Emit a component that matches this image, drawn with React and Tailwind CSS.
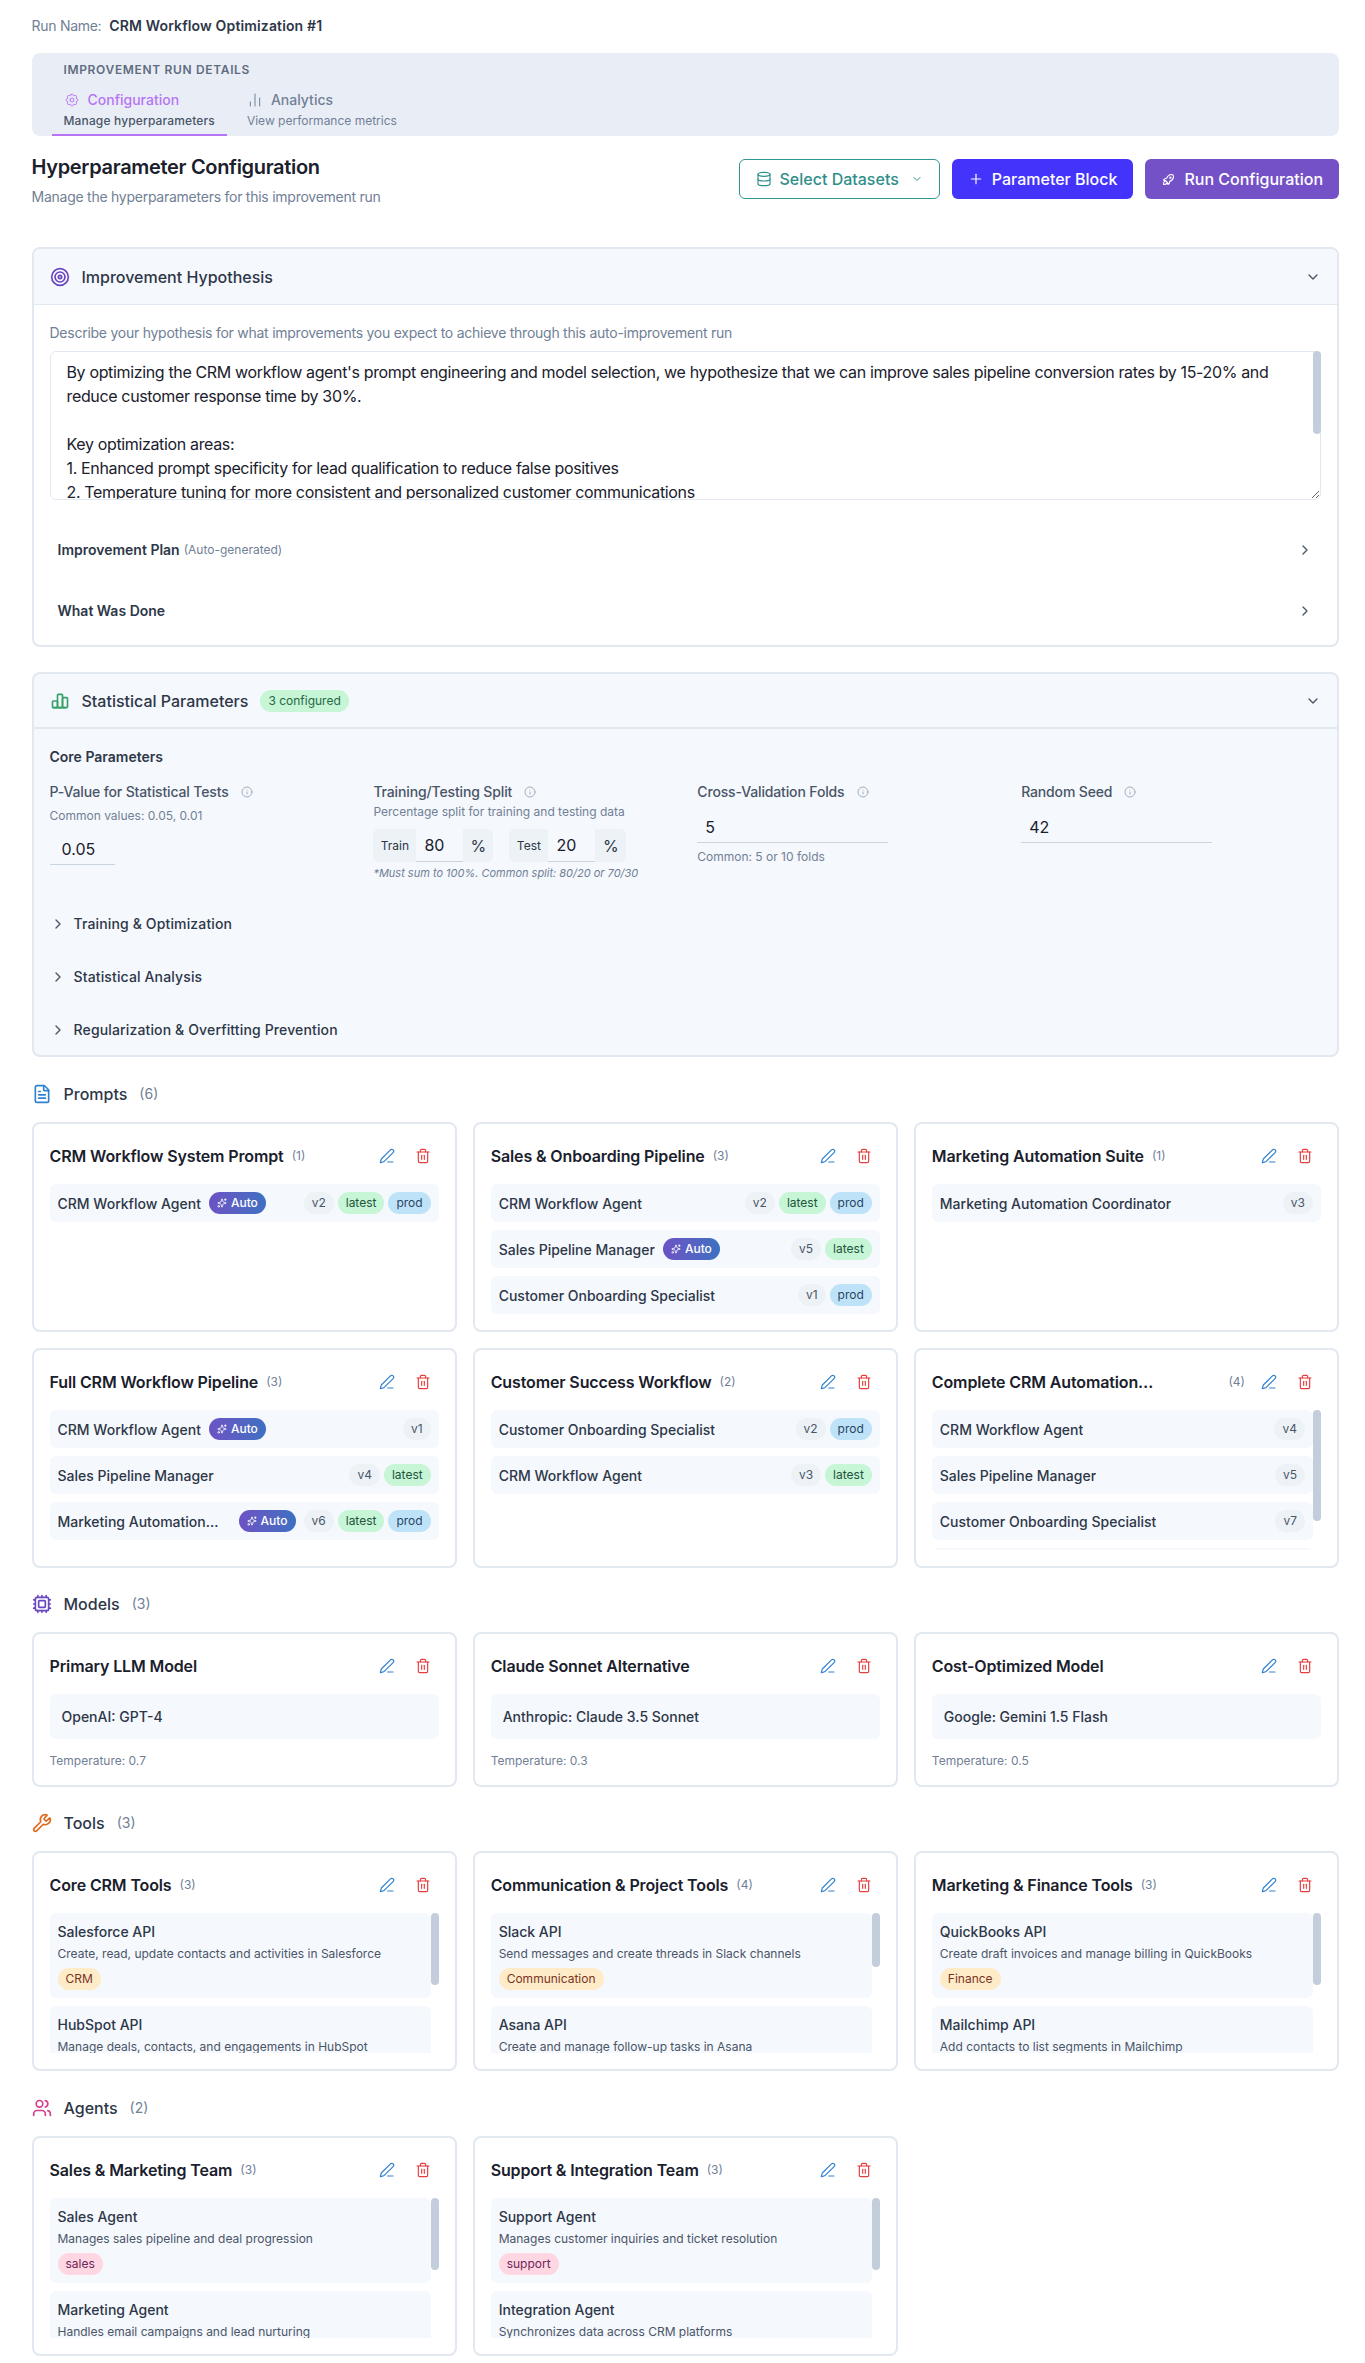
import {
  ChartNoAxesColumn, ChevronDown, ChevronRight, Cpu, Database, FileText, Info, PenLine,
  Plus, Sparkles, Target, Trash2, Users, Wrench,
} from "lucide-react";
import { TbChartBar, TbRocket, TbSettings } from "react-icons/tb";

const hypothesis = `By optimizing the CRM workflow agent's prompt engineering and model selection, we hypothesize that we can improve sales pipeline conversion rates by 15-20% and reduce customer response time by 30%.

Key optimization areas:
1. Enhanced prompt specificity for lead qualification to reduce false positives
2. Temperature tuning for more consistent and personalized customer communications
3. Model selection comparing cost against response quality
4. Tool routing improvements for faster CRM updates

Success will be measured against the held-out test set.`;

const prompts = [
  { title: "CRM Workflow System Prompt", count: 1, rows: [
    { name: "CRM Workflow Agent", auto: true, v: "v2", latest: true, prod: true },
  ] },
  { title: "Sales & Onboarding Pipeline", count: 3, rows: [
    { name: "CRM Workflow Agent", v: "v2", latest: true, prod: true },
    { name: "Sales Pipeline Manager", auto: true, v: "v5", latest: true },
    { name: "Customer Onboarding Specialist", v: "v1", prod: true },
  ] },
  { title: "Marketing Automation Suite", count: 1, rows: [
    { name: "Marketing Automation Coordinator", v: "v3" },
  ] },
  { title: "Full CRM Workflow Pipeline", count: 3, rows: [
    { name: "CRM Workflow Agent", auto: true, v: "v1" },
    { name: "Sales Pipeline Manager", v: "v4", latest: true },
    { name: "Marketing Automation Coordinator", auto: true, v: "v6", latest: true, prod: true },
  ] },
  { title: "Customer Success Workflow", count: 2, rows: [
    { name: "Customer Onboarding Specialist", v: "v2", prod: true },
    { name: "CRM Workflow Agent", v: "v3", latest: true },
  ] },
  { title: "Complete CRM Automation Orchestration", count: 4, thumb: "h-[111px]", rows: [
    { name: "CRM Workflow Agent", v: "v4" },
    { name: "Sales Pipeline Manager", v: "v5" },
    { name: "Customer Onboarding Specialist", v: "v7" },
    { name: "Marketing Automation Coordinator", v: "v2" },
  ] },
];

const models = [
  { title: "Primary LLM Model", model: "OpenAI: GPT-4", temp: "0.7" },
  { title: "Claude Sonnet Alternative", model: "Anthropic: Claude 3.5 Sonnet", temp: "0.3" },
  { title: "Cost-Optimized Model", model: "Google: Gemini 1.5 Flash", temp: "0.5" },
];

const tools = [
  { title: "Core CRM Tools", count: 3, thumb: "h-[72px]", rows: [
    { name: "Salesforce API", desc: "Create, read, update contacts and activities in Salesforce", tag: "CRM" },
    { name: "HubSpot API", desc: "Manage deals, contacts, and engagements in HubSpot", tag: "CRM" },
    { name: "Zendesk API", desc: "Look up customer tickets in Zendesk", tag: "CRM" },
  ] },
  { title: "Communication & Project Tools", count: 4, thumb: "h-[54px]", rows: [
    { name: "Slack API", desc: "Send messages and create threads in Slack channels", tag: "Communication" },
    { name: "Asana API", desc: "Create and manage follow-up tasks in Asana", tag: "Project" },
    { name: "Gmail API", desc: "Draft and send customer emails", tag: "Communication" },
    { name: "Jira API", desc: "Track issues across projects", tag: "Project" },
  ] },
  { title: "Marketing & Finance Tools", count: 3, thumb: "h-[72px]", rows: [
    { name: "QuickBooks API", desc: "Create draft invoices and manage billing in QuickBooks", tag: "Finance" },
    { name: "Mailchimp API", desc: "Add contacts to list segments in Mailchimp", tag: "Marketing" },
    { name: "Stripe API", desc: "Check subscription and payment status", tag: "Finance" },
  ] },
];

const agents = [
  { title: "Sales & Marketing Team", count: 3, thumb: "h-[72px]", rows: [
    { name: "Sales Agent", desc: "Manages sales pipeline and deal progression", tag: "sales" },
    { name: "Marketing Agent", desc: "Handles email campaigns and lead nurturing", tag: "marketing" },
    { name: "Onboarding Agent", desc: "Guides new customers through setup", tag: "sales" },
  ] },
  { title: "Support & Integration Team", count: 3, thumb: "h-[72px]", rows: [
    { name: "Support Agent", desc: "Manages customer inquiries and ticket resolution", tag: "support" },
    { name: "Integration Agent", desc: "Synchronizes data across CRM platforms", tag: "integration" },
    { name: "Billing Agent", desc: "Answers invoice and billing questions", tag: "support" },
  ] },
];

function Chip({ className, children }) {
  return (
    <span className={`inline-flex h-[22px] shrink-0 items-center rounded-full px-2 text-xs ${className}`}>
      {children}
    </span>
  );
}

// the scrollbar of a list is drawn as a thumb on top of it
function ScrollList({ thumb, children }) {
  return (
    <div className="relative">
      <div className={`flex max-h-[140px] flex-col gap-2 overflow-y-hidden ${thumb ? "pr-2" : ""}`}>{children}</div>
      {thumb && <div className={`absolute top-0 right-0 w-2 rounded-full bg-[#c3cddb] ${thumb}`} />}
    </div>
  );
}

function SectionTitle({ icon, label, count, className }) {
  return (
    <div className={`mb-4 flex h-6 items-center ${className}`}>
      {icon}
      <span className="ml-3 text-base font-medium text-[#2d3748]">{label}</span>
      <span className="ml-3 text-sm text-[#718096]">({count})</span>
    </div>
  );
}

function CardHeader({ title, count }) {
  return (
    <div className="mb-3 flex h-8 items-center">
      <div className="flex min-w-0 flex-1 items-center gap-2">
        <span className="line-clamp-1 text-base font-semibold tracking-[-0.008em] text-[#1a202c]">{title}</span>
        {count && <span className="shrink-0 text-xs text-[#718096]">({count})</span>}
      </div>
      <div className="ml-2 flex shrink-0 items-center gap-1">
        <button className="flex size-8 items-center justify-center text-[#3182ce]">
          <PenLine size={16} strokeWidth={1.75} />
        </button>
        <button className="flex size-8 items-center justify-center text-[#e53e3e]">
          <Trash2 size={16} strokeWidth={1.75} />
        </button>
      </div>
    </div>
  );
}

function PromptRow({ row }) {
  return (
    <div className="flex h-[38px] shrink-0 items-center justify-between gap-2 rounded-md bg-[#f5f8fc] px-2">
      <div className="flex min-w-0 items-center gap-2">
        <span className="mt-0.5 line-clamp-1 text-sm font-medium text-[#2d3748]">{row.name}</span>
        {row.auto && (
          <Chip className="gap-1 bg-gradient-to-r from-[#6b52c4] to-[#3b70c2] font-medium text-white">
            <Sparkles size={10} /> Auto
          </Chip>
        )}
      </div>
      <div className="flex shrink-0 items-center gap-1">
        <Chip className="bg-[#edf2f7] text-[#4a5568]">{row.v}</Chip>
        {row.latest && <Chip className="bg-[#c6f6d5] text-[#22543d]">latest</Chip>}
        {row.prod && <Chip className="bg-[#bee3f8] text-[#2a4365]">prod</Chip>}
      </div>
    </div>
  );
}

function DetailRow({ row, tagClass }) {
  return (
    <div className="shrink-0 rounded-md bg-[#f5f8fc] px-2 pt-[9px] pb-2">
      <div className="text-sm font-medium text-[#2d3748]">{row.name}</div>
      <div className="mt-1 text-xs text-[#4a5568]">{row.desc}</div>
      <Chip className={`mt-1.5 ${tagClass}`}>{row.tag}</Chip>
    </div>
  );
}

function Label({ children }) {
  return (
    <div className="flex h-5 items-center text-sm font-medium tracking-[-0.01em] text-[#4a5568]">
      {children}
      <Info size={12} className="ml-3 text-[#a0aec0]" />
    </div>
  );
}

function SplitInput({ label, value, labelWidth, unitWidth }) {
  return (
    <div className="flex h-[33px]">
      <span className={`flex items-center justify-center rounded-l-md bg-[#edf2f7] text-xs text-[#2d3748] ${labelWidth}`}>{label}</span>
      <input defaultValue={value} className="w-[47px] border-b border-[#cbd5e0] bg-transparent pl-2 text-base text-[#1a202c] outline-none" />
      <span className={`flex items-center justify-center rounded-r-md bg-[#edf2f7] text-base text-[#2d3748] ${unitWidth}`}>%</span>
    </div>
  );
}

function Disclosure({ label }) {
  return (
    <div className="flex h-[50px] items-center gap-2">
      <ChevronRight size={16} className="text-[#4a5568]" />
      <span className="text-sm font-medium tracking-[0.01em] text-[#2d3748]">{label}</span>
    </div>
  );
}

export default function App() {
  return (
    <div className="bg-white pt-4 pr-[26px] pb-[7px] pl-[31.5px] font-['Inter',sans-serif] text-[#1a202c]">
      {/* Run name */}
      <div className="flex h-5 items-center text-sm">
        <span className="tracking-[-0.02em] text-[#718096]">Run Name:</span>
        <span className="ml-2 font-semibold tracking-[0.01em] text-[#2d3748]">CRM Workflow Optimization #1</span>
      </div>

      {/* Tab bar */}
      <div className="mt-[17px] h-[83px] rounded-lg bg-[#e9eef6] pt-[9px] pl-5">
        <div className="ml-3 text-xs leading-4 font-semibold tracking-[0.055em] text-[#5f6c80]">IMPROVEMENT RUN DETAILS</div>
        <div className="mt-[5px] flex gap-2">
          <div className="h-[53px] border-b-2 border-[#b774f4] px-3 pt-[7px]">
            <div className="flex h-5 items-center gap-2 text-sm font-medium text-[#b774f4]">
              <TbSettings size={16} strokeWidth={1.5} /> Configuration
            </div>
            <div className="mt-[3px] text-xs font-medium tracking-[0.012em] text-[#4a5568]">Manage hyperparameters</div>
          </div>
          <div className="h-[53px] px-3 pt-[7px]">
            <div className="flex h-5 items-center gap-2 text-sm font-medium text-[#718096]">
              <ChartNoAxesColumn size={16} strokeWidth={1.5} /> Analytics
            </div>
            <div className="mt-[3px] text-xs text-[#718096]">View performance metrics</div>
          </div>
        </div>
      </div>

      {/* Page heading and actions */}
      <div className="mt-[17px] flex items-start justify-between">
        <div>
          <h1 className="text-xl font-semibold tracking-[-0.016em] text-[#1a202c]">Hyperparameter Configuration</h1>
          <p className="mt-1.5 text-sm tracking-[-0.018em] text-[#718096]">Manage the hyperparameters for this improvement run</p>
        </div>
        <div className="mt-[6px] flex items-center gap-3">
          <button className="flex h-10 items-center gap-2 rounded-md border border-[#319795] bg-white px-4 text-base font-medium text-[#2f8f8a]">
            <Database size={16} strokeWidth={1.75} /> Select Datasets <ChevronDown size={12} className="ml-1" />
          </button>
          <button className="flex h-10 items-center gap-2 rounded-md bg-[#4433fb] px-4 text-base font-medium text-white">
            <Plus size={16} strokeWidth={1.75} /> Parameter Block
          </button>
          <button className="flex h-10 items-center gap-2 rounded-md bg-[#7551c8] px-4 text-base font-medium text-white">
            <TbRocket size={15} strokeWidth={1.75} /> Run Configuration
          </button>
        </div>
      </div>

      {/* Improvement Hypothesis */}
      <section className="mt-10 overflow-hidden rounded-lg border-2 border-[#e2e8f0]">
        <div className="flex h-[56px] items-center justify-between border-b border-[#e2e8f0] bg-[#f5f8fc] px-4">
          <div className="flex items-center gap-3">
            <Target size={20} className="text-[#6b46c1]" />
            <span className="text-base font-medium text-[#2d3748]">Improvement Hypothesis</span>
          </div>
          <ChevronDown size={16} className="text-[#4a5568]" />
        </div>
        <div className="px-4 pt-[18px] pb-[14px]">
          <p className="text-sm tracking-[-0.018em] text-[#718096]">Describe your hypothesis for what improvements you expect to achieve through this auto-improvement run</p>
          <div className="relative mt-2">
            <textarea
              defaultValue={hypothesis}
              className="block h-[149px] w-full rounded-md border border-[#e2e8f0] px-4 py-2 text-base leading-6 tracking-[-0.022em] text-[#1a202c] outline-none"
            />
            <div className="absolute top-0 right-0 h-[83px] w-2 rounded-full bg-[#c3cddb]" />
          </div>
          <div className="mt-[30px] flex h-10 items-center justify-between px-2">
            <div className="flex items-center gap-1">
              <span className="text-sm font-semibold text-[#2d3748]">Improvement Plan</span>
              <span className="text-xs text-[#718096]">(Auto-generated)</span>
            </div>
            <ChevronRight size={16} className="text-[#4a5568]" />
          </div>
          <div className="mt-[21px] flex h-10 items-center justify-between px-2">
            <span className="text-sm font-semibold text-[#2d3748]">What Was Done</span>
            <ChevronRight size={16} className="text-[#4a5568]" />
          </div>
        </div>
      </section>

      {/* Statistical Parameters */}
      <section className="mt-[25px] overflow-hidden rounded-lg border-2 border-[#e2e8f0] bg-[#f5f8fc]">
        <div className="flex h-[55px] items-center justify-between border-b-2 border-[#e2e8f0] px-4">
          <div className="flex items-center gap-3">
            <TbChartBar size={20} className="text-[#38a169]" />
            <span className="text-base font-medium text-[#2d3748]">Statistical Parameters</span>
            <Chip className="bg-[#c6f6d5] text-[#276749]">3 configured</Chip>
          </div>
          <ChevronDown size={16} className="text-[#4a5568]" />
        </div>
        <div className="px-4 pt-[18px]">
          <h3 className="text-sm font-semibold text-[#2d3748]">Core Parameters</h3>
          <div className="mt-[15px] grid grid-cols-4 gap-6">
            <div>
              <Label>P-Value for Statistical Tests</Label>
              <div className="mt-1.5 text-xs text-[#718096]">Common values: 0.05, 0.01</div>
              <input defaultValue="0.05" className="mt-[9px] block h-8 w-[65px] border-b border-[#cbd5e0] bg-transparent pl-3 text-base text-[#1a202c] outline-none" />
            </div>
            <div>
              <Label>Training/Testing Split</Label>
              <div className="mt-0.5 text-xs text-[#718096]">Percentage split for training and testing data</div>
              <div className="mt-[9px] flex gap-4">
                <SplitInput label="Train" value="80" labelWidth="w-[43px]" unitWidth="w-[30px]" />
                <SplitInput label="Test" value="20" labelWidth="w-[39px]" unitWidth="w-[31px]" />
              </div>
              <div className="mt-[3px] text-[11px] text-[#718096] italic">*Must sum to 100%. Common split: 80/20 or 70/30</div>
            </div>
            <div>
              <Label>Cross-Validation Folds</Label>
              <input defaultValue="5" className="mt-[9px] block h-8 w-[191px] border-b border-[#cbd5e0] bg-transparent pl-2 text-base text-[#1a202c] outline-none" />
              <div className="mt-1.5 text-xs text-[#718096]">Common: 5 or 10 folds</div>
            </div>
            <div>
              <Label>Random Seed</Label>
              <input defaultValue="42" className="mt-[9px] block h-8 w-[191px] border-b border-[#cbd5e0] bg-transparent pl-2 text-base text-[#1a202c] outline-none" />
            </div>
          </div>
          <div className="mt-[17px] flex flex-col gap-[3px]">
            <Disclosure label="Training & Optimization" />
            <Disclosure label="Statistical Analysis" />
            <Disclosure label="Regularization & Overfitting Prevention" />
          </div>
        </div>
      </section>

      {/* Prompts */}
      <SectionTitle className="mt-[25px]" icon={<FileText size={20} className="text-[#3182ce]" />} label="Prompts" count={6} />
      <div className="grid grid-cols-3 gap-4">
        {prompts.map((card) => (
          <div key={card.title} className="rounded-lg border-2 border-[#e2e8f0] bg-white p-4">
            <CardHeader title={card.title} count={card.count} />
            <ScrollList thumb={card.thumb}>
              {card.rows.map((row) => (
                <PromptRow key={row.name} row={row} />
              ))}
            </ScrollList>
          </div>
        ))}
      </div>

      {/* Models */}
      <SectionTitle className="mt-6" icon={<Cpu size={20} className="text-[#6b46c1]" />} label="Models" count={3} />
      <div className="grid grid-cols-3 gap-4">
        {models.map((card) => (
          <div key={card.title} className="rounded-lg border-2 border-[#e2e8f0] bg-white p-4">
            <CardHeader title={card.title} />
            <div className="flex h-[45px] items-center rounded-md bg-[#f5f8fc] px-3 pt-0.5 text-sm font-medium text-[#2d3748]">{card.model}</div>
            <div className="mt-[14px] text-xs text-[#718096]">Temperature: {card.temp}</div>
          </div>
        ))}
      </div>

      {/* Tools */}
      <SectionTitle className="mt-6" icon={<Wrench size={20} className="text-[#dd6b20]" />} label="Tools" count={3} />
      <div className="grid grid-cols-3 gap-4">
        {tools.map((card) => (
          <div key={card.title} className="rounded-lg border-2 border-[#e2e8f0] bg-white p-4">
            <CardHeader title={card.title} count={card.count} />
            <ScrollList thumb={card.thumb}>
              {card.rows.map((row) => (
                <DetailRow key={row.name} row={row} tagClass="bg-[#feebc8] text-[#7b341e]" />
              ))}
            </ScrollList>
          </div>
        ))}
      </div>

      {/* Agents */}
      <SectionTitle className="mt-[25px]" icon={<Users size={20} className="text-[#d53f8c]" />} label="Agents" count={2} />
      <div className="grid grid-cols-3 gap-4">
        {agents.map((card) => (
          <div key={card.title} className="rounded-lg border-2 border-[#e2e8f0] bg-white p-4">
            <CardHeader title={card.title} count={card.count} />
            <ScrollList thumb={card.thumb}>
              {card.rows.map((row) => (
                <DetailRow key={row.name} row={row} tagClass="bg-[#fed7e2] text-[#702459]" />
              ))}
            </ScrollList>
          </div>
        ))}
      </div>
    </div>
  );
}
